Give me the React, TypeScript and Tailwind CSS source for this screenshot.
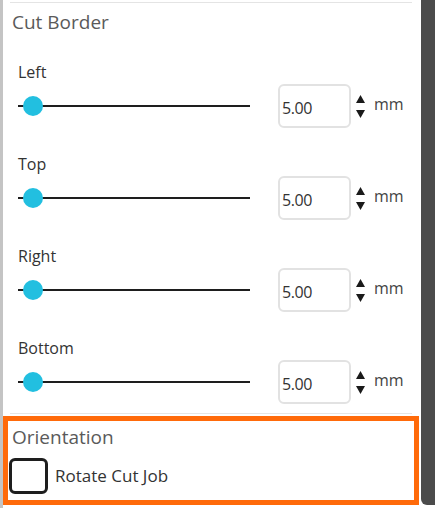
import React from "react";

const rows = ["Left", "Top", "Right", "Bottom"];

function Spinner() {
  return (
    <div className="flex flex-col items-center gap-[7px] w-[10px]">
      <svg width="9" height="8" viewBox="0 0 9 8">
        <path d="M4.5 0 L9 8 L0 8 Z" fill="#1a1a1a" />
      </svg>
      <svg width="9" height="8" viewBox="0 0 9 8">
        <path d="M0 0 L9 0 L4.5 8 Z" fill="#1a1a1a" />
      </svg>
    </div>
  );
}

function BorderRow({ label }: { label: string }) {
  return (
    <div className="flex flex-col">
      <div className="h-[24px] flex items-center text-[16px] text-[#333]">{label}</div>
      <div className="h-[44px] flex items-center">
        {/* slider */}
        <div className="relative w-[232px] h-[20px] flex items-center">
          <div className="w-full h-[2px] bg-[#1e1e1e]" />
          <div className="absolute left-[5px] top-0 w-[20px] h-[20px] rounded-full bg-[#22bfe0]" />
        </div>
        <div className="ml-[28px] w-[73px] h-[44px] rounded-[6px] border-2 border-[#e2e2e2] flex items-center pl-[2px] pt-[3px] text-[16px] tracking-[-0.4px] text-[#333]">
          5.00
        </div>
        <div className="ml-[4px]">
          <Spinner />
        </div>
        <div className="ml-[9px] text-[16px] text-[#444] pb-[4px]">mm</div>
      </div>
    </div>
  );
}

export default function App() {
  return (
    <div
      className="w-[435px] h-[508px] flex bg-white overflow-hidden"
      style={{ fontFamily: '"Open Sans", "Noto Sans", sans-serif' }}
    >
      <div className="w-[3px] h-full bg-[#c4c4c4]" />
      <div className="w-[418px] h-full flex flex-col bg-white">
        <div className="pt-[2px] pl-[7px] pr-[9px]">
          <div className="h-px bg-[#e4e4e4]" />
        </div>
        <div className="h-[38px] flex items-center pl-[9px] text-[19px] text-[#5a5a5a]">
          Cut Border
        </div>
        <div className="pt-[19px] pl-[15px] flex flex-col gap-[24px]">
          {rows.map((r) => (
            <BorderRow key={r} label={r} />
          ))}
        </div>
        <div className="mt-[9px] pl-[7px] pr-[9px]">
          <div className="h-px bg-[#e6e6e6]" />
        </div>
        <div className="mt-[2px] mr-[2px] border-[5px] border-[#ff6a0a] flex flex-col pb-[6px]">
          <div className="h-[32px] flex items-center pl-[4px] text-[19px] text-[#5a5a5a]">
            Orientation
          </div>
          <div className="mt-[5px] h-[36px] flex items-center">
            <div className="ml-[1px] w-[39px] h-[36px] rounded-[6px] border-[3px] border-[#1e1e1e] bg-white" />
            <div className="ml-[7px] text-[17px] text-[#333]">Rotate Cut Job</div>
          </div>
        </div>
      </div>
      <div className="w-[14px] h-[505px] bg-[#4b4b4b] rounded-bl-[6px]" />
    </div>
  );
}
